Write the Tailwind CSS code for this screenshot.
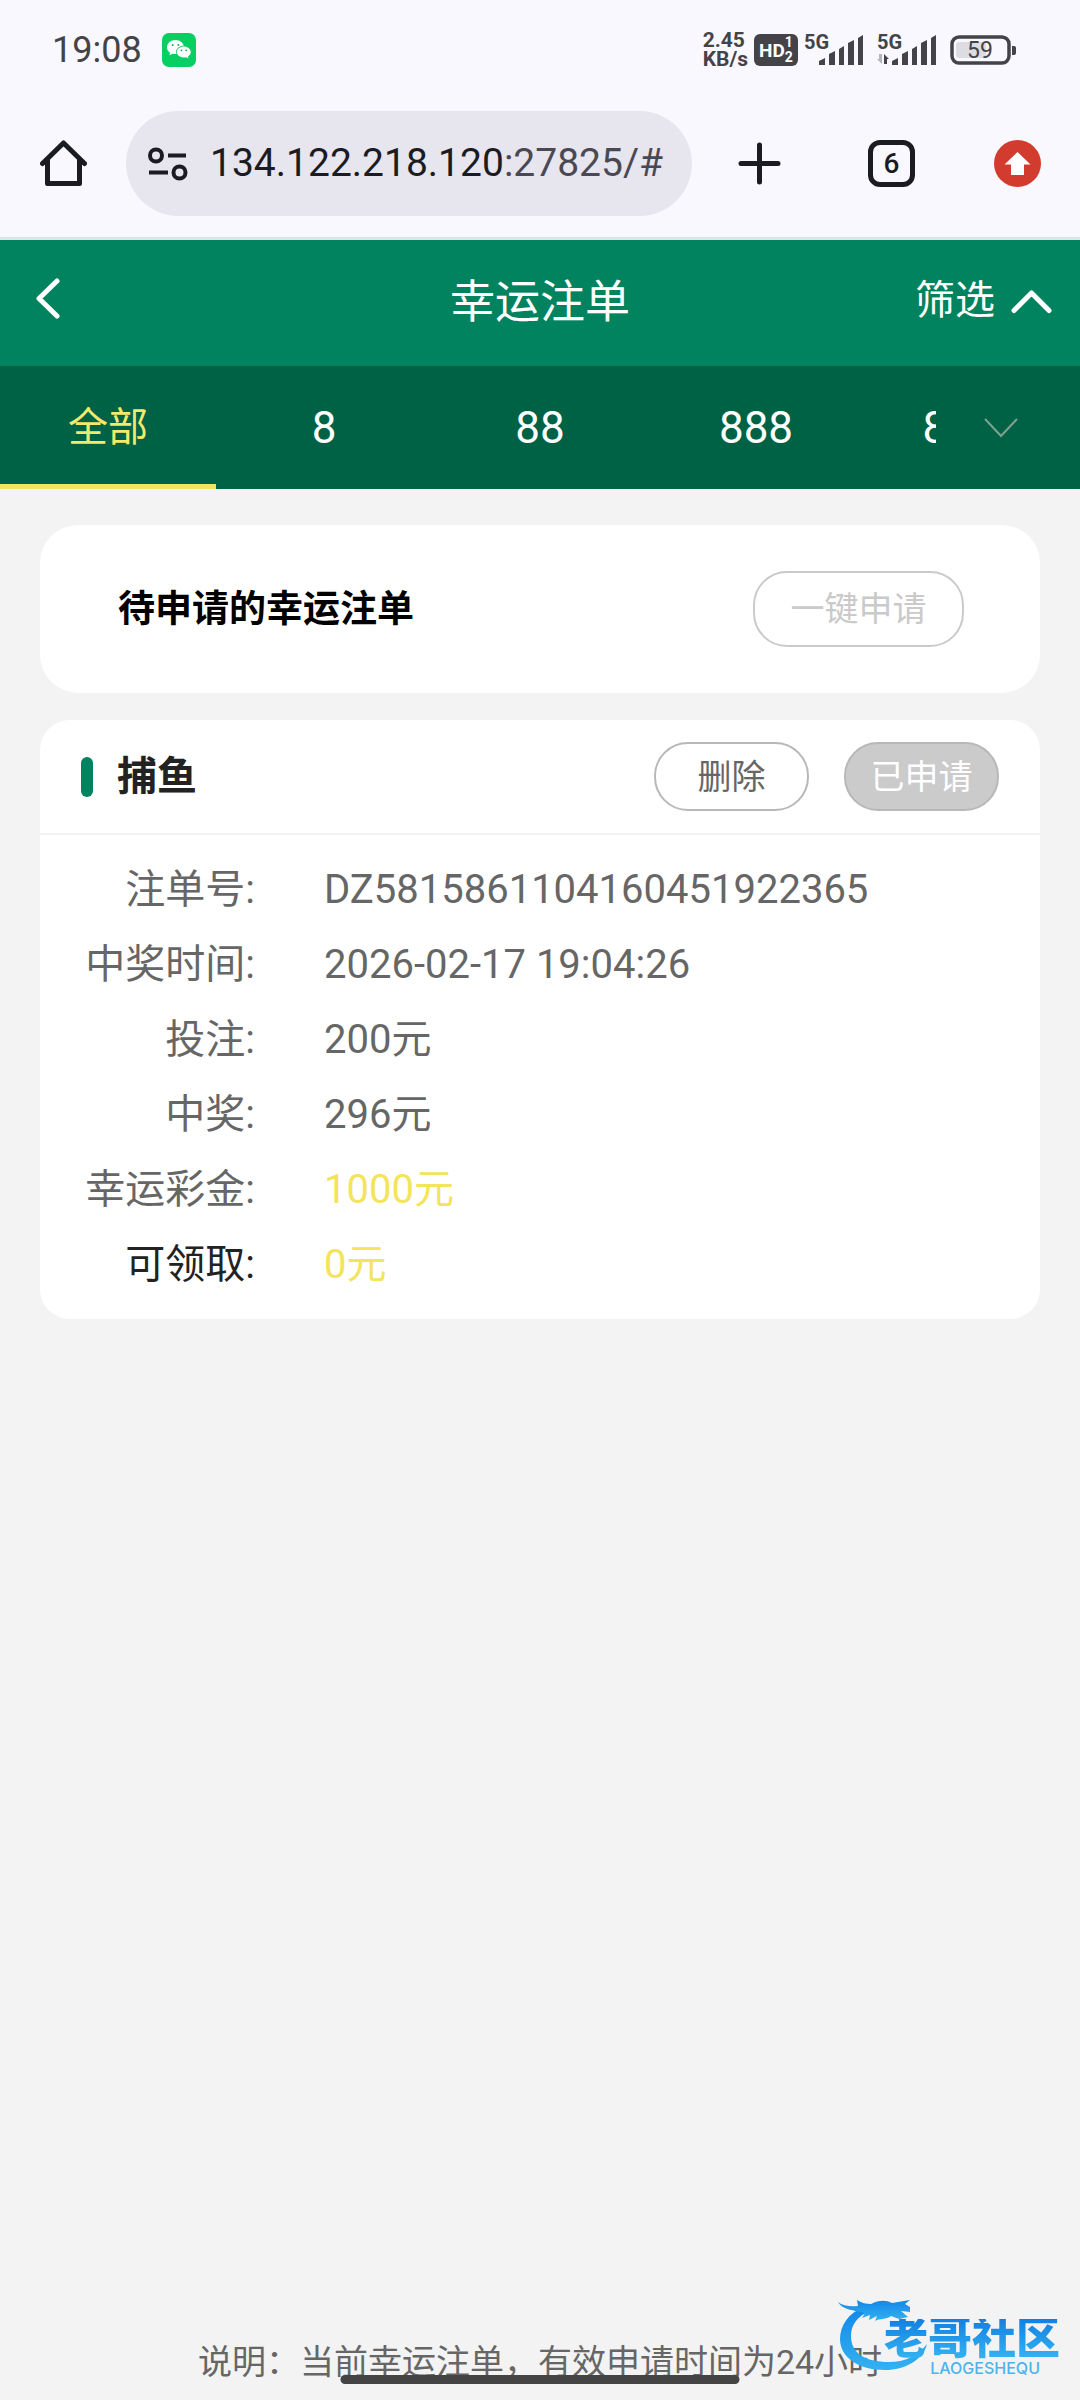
<!DOCTYPE html>
<html lang="zh-CN">
  <head>
    <meta charset="UTF-8" />
    <meta name="viewport" content="width=device-width, initial-scale=1.0" />
    <title>幸运注单</title>
    <script src="https://cdn.jsdelivr.net/npm/@tailwindcss/browser@4"></script>
  </head>
  <body class="bg-[#f3f3f3] font-[Roboto,'Noto_Sans_CJK_SC',sans-serif]">
    <div class="relative flex min-h-screen flex-col overflow-hidden">
      <!-- Status bar -->
      <div class="flex h-[100px] items-center justify-between bg-[#f9f8ff] pr-[63px] pl-[52px] text-[#444347]">
        <div class="flex items-center gap-5">
          <span class="text-[36px] leading-none">19:08</span>
          <svg class="size-[34px]" viewBox="0 0 34 34">
            <rect width="34" height="34" rx="7" fill="#07cf62" />
            <path d="M13.5 7C8.800 7 5 10.200 5 14.200c0 2.300 1.200 4.200 3.100 5.500l-.6 2.500 3-1.500c1 .3 2 .4 3 .4 4.700 0 8.500-3.100 8.500-6.900S18.200 7 13.500 7z" fill="#fff" />
            <ellipse cx="21.800" cy="19" rx="7.800" ry="6.500" fill="#07cf62" />
            <path d="M21.800 13.500c-3.900 0-7 2.500-7 5.600s3.100 5.500 7 5.500c.8 0 1.600-.1 2.400-.3l2.300 1.300-.5-2c1.700-1.100 2.800-2.700 2.800-4.500 0-3.100-3.100-5.600-7-5.600z" fill="#fff" />
            <g fill="#07b455">
              <circle cx="10.700" cy="12" r="1" />
              <circle cx="16.300" cy="12" r="1" />
              <circle cx="19.400" cy="17.300" r=".9" />
              <circle cx="24.200" cy="17.300" r=".9" />
            </g>
          </svg>
        </div>
        <div class="flex items-center gap-1.5">
          <div class="text-[21px] leading-[19px] font-bold">
            <div>2.45</div>
            <div>KB/s</div>
          </div>
          <div class="flex h-8 w-11 items-center justify-center rounded-md bg-[#444347] text-white">
            <span class="text-[19px] leading-none font-bold">HD</span>
            <span class="text-[14px] leading-[15px] font-bold">1<br />2</span>
          </div>
          <svg class="h-[34px] w-[61px]" viewBox="0 0 61 34" fill="#444347">
            <text x="0" y="16" font-size="20" font-weight="bold">5G</text>
            <path d="M15 32v-4l6-3v7zM25 32V21l6-3v14zM35 32V16l5-3v19zM44 32V10l6-3v25zM54 32V5l5-3v30z" />
          </svg>
          <svg class="ml-1.5 h-[34px] w-[61px]" viewBox="0 0 61 34" fill="#444347">
            <text x="0" y="16" font-size="20" font-weight="bold">5G</text>
            <path d="M15 32v-4l6-3v7zM25 32V21l6-3v14zM35 32V16l5-3v19zM44 32V10l6-3v25zM54 32V5l5-3v30z" />
            <path d="M5 31V21H2v5H0z" fill="#b5b4ba" />
            <path d="M7 31V21l5 5h-2v5z" />
          </svg>
          <svg class="ml-1.5 h-[30px] w-[67px]" viewBox="0 0 67 30">
            <rect x="2" y="2" width="57" height="26" rx="7" fill="none" stroke="#444347" stroke-width="3.500" />
            <rect x="6" y="7" width="30" height="16" rx="3" fill="#dddce3" />
            <path d="M62 11h2a2 2 0 0 1 2 2v5a2 2 0 0 1-2 2h-2z" fill="#444347" />
            <text x="30" y="23" font-size="23" text-anchor="middle" fill="#444347">59</text>
          </svg>
        </div>
      </div>

      <!-- Browser toolbar -->
      <div class="flex items-center border-b-[3px] border-[#d9e7e8] bg-[#f9f8ff] pt-[11px] pr-[39px] pb-[21px] pl-10 text-[#1b1b22]">
        <button aria-label="主页" class="mr-[39px]">
          <svg class="size-[47px]" viewBox="0 0 47 47" fill="none" stroke="currentColor" stroke-width="5" stroke-linecap="round" stroke-linejoin="round">
            <path d="M2.500 23.500L23.500 3l21 20.500M7.500 19.500v24h32v-24" />
          </svg>
        </button>
        <button class="flex h-[105px] flex-1 items-center gap-[22px] rounded-full bg-[#e7e5ee] pl-[22px] text-[39px]">
          <svg class="h-[34px] w-10" viewBox="0 0 40 34" fill="none" stroke="currentColor" stroke-width="4">
            <circle cx="8" cy="8.500" r="6" />
            <path d="M20 8.500h18M1 25.500h19" />
            <circle cx="31.500" cy="25.500" r="6" />
          </svg>
          <span>134.122.218.120<span class="text-[#4a4953]">:27825/#</span></span>
        </button>
        <button aria-label="新标签页" class="ml-[46px]">
          <svg class="size-[43px]" viewBox="0 0 43 43" stroke="currentColor" stroke-width="5" stroke-linecap="round">
            <path d="M21.500 3v37M3 21.500h37" />
          </svg>
        </button>
        <button class="ml-[87px] flex size-[47px] items-center justify-center rounded-xl border-5 border-[#1b1b22] text-[28px] leading-none font-medium">6</button>
        <button aria-label="更新" class="ml-[79px]">
          <svg class="size-[47px]" viewBox="0 0 47 47">
            <circle cx="23.500" cy="23.500" r="23.500" fill="#d23c2f" />
            <path d="M23.500 12L36.500 24.500H30V35H17V24.500h-6.500z" fill="#fff" />
          </svg>
        </button>
      </div>

      <!-- Page header -->
      <header class="grid h-[126px] grid-cols-3 items-center bg-[#02835f] px-7 pb-1 text-white">
        <button aria-label="返回" class="justify-self-start pb-1 pl-[7px]">
          <svg class="h-[42px] w-[26px]" viewBox="0 0 26 42" fill="none" stroke="currentColor" stroke-width="5" stroke-linecap="round" stroke-linejoin="round">
            <path d="M22 3L4 20.500 22 38" />
          </svg>
        </button>
        <h1 class="justify-self-center pt-0.5 text-[45px] leading-none">幸运注单</h1>
        <button class="flex items-center gap-4 justify-self-end text-[40px] leading-none">
          筛选
          <svg class="h-[25px] w-[41px]" viewBox="0 0 41 25" fill="none" stroke="currentColor" stroke-width="5" stroke-linecap="round" stroke-linejoin="round">
            <path d="M3 21.500L20.500 4 38 21.500" />
          </svg>
        </button>
      </header>

      <!-- Filter tabs -->
      <nav class="flex h-[123px] bg-[#006245] text-white">
        <div class="flex flex-1 overflow-hidden text-[44px] leading-none">
          <a href="#" class="flex w-[20vw] flex-none items-center justify-center text-[40px] text-[#f3e96b] shadow-[inset_0_-5px_#f3e45c]">全部</a>
          <a href="#" class="flex w-[20vw] flex-none items-center justify-center">8</a>
          <a href="#" class="flex w-[20vw] flex-none items-center justify-center">88</a>
          <a href="#" class="flex w-[20vw] flex-none items-center justify-center">888</a>
          <a href="#" class="flex w-[20vw] flex-none items-center justify-center">8888</a>
        </div>
        <button aria-label="更多" class="flex w-36 items-center pl-12">
          <svg class="h-5 w-[34px]" viewBox="0 0 34 20" fill="none" stroke="#7fa092" stroke-width="2">
            <path d="M1 1l16 17L33 1" />
          </svg>
        </button>
      </nav>

      <main class="flex flex-col gap-[27px] px-10 pt-9">
        <!-- Pending orders -->
        <section class="flex h-[168px] items-center justify-between rounded-[38px] bg-white pr-[76px] pl-[78px]">
          <h2 class="text-[37px] leading-none font-bold text-black">待申请的幸运注单</h2>
          <button class="h-[76px] w-[211px] rounded-[34px] border-2 border-[#cacaca] text-[34px] leading-none text-[#cacaca]">一键申请</button>
        </section>

        <!-- Order card -->
        <section class="rounded-[30px] bg-white">
          <div class="flex h-[115px] items-center border-b-2 border-[#f2f2f2] px-[41px]">
            <span class="h-10 w-3 rounded-full bg-[#02835f]"></span>
            <h2 class="ml-6 flex-1 text-[40px] leading-none font-bold text-[#222]">捕鱼</h2>
            <div class="flex gap-[35px] text-[34px] leading-none">
              <button class="h-[69px] w-[155px] rounded-[34px] border-2 border-[#b8b8b8] text-[#666]">删除</button>
              <button class="h-[69px] w-[155px] rounded-[34px] border-2 border-[#b8b8b8] bg-[#cbcbcb] text-white">已申请</button>
            </div>
          </div>
          <dl class="grid grid-cols-[215px_1fr] gap-x-[69px] pt-[17px] pb-[17px] text-[40px] leading-[75px] text-[#666]">
            <dt class="text-right">注单号:</dt>
            <dd>DZ5815861104160451922365</dd>
            <dt class="text-right">中奖时间:</dt>
            <dd>2026-02-17 19:04:26</dd>
            <dt class="text-right">投注:</dt>
            <dd>200元</dd>
            <dt class="text-right">中奖:</dt>
            <dd>296元</dd>
            <dt class="text-right">幸运彩金:</dt>
            <dd class="text-[#f3e45c]">1000元</dd>
            <dt class="text-right text-[#222]">可领取:</dt>
            <dd class="text-[#f3e45c]">0元</dd>
          </dl>
        </section>
      </main>

      <footer class="mt-auto pb-3 text-center text-[34px] leading-[52px] text-[#666]">
        说明：当前幸运注单，有效申请时间为24小时
      </footer>

      <!-- Home indicator -->
      <div class="absolute bottom-4 left-1/2 h-[9px] w-[399px] -translate-x-1/2 rounded-full bg-[#444]"></div>

      <!-- Community logo -->
      <div class="absolute right-5 bottom-6 h-[80px] w-[222px]">
        <svg class="absolute inset-0 h-[80px] w-[96px]" viewBox="0 0 96 80">
          <defs>
            <linearGradient id="dragon" x1="0" y1="0" x2="0" y2="1">
              <stop offset="0" stop-color="#1287e6" />
              <stop offset="1" stop-color="#33b2f2" />
            </linearGradient>
          </defs>
          <g fill="url(#dragon)">
            <path d="M26 11C10 17 2 30 2 43c0 18 18 31 45 31 20 0 38-10 42-26-9 12-22 18-38 18-24 0-38-9-38-26 0-12 7-20 19-25z" />
            <path d="M0 6c5 4 12 5 20 4l-1-6c5 3 9 4 14 4 8-4 15-4 21-1l18-3-5 4 5 3v5l-9-1 7 6-9 2-8-3c-5 4-11 2-16 5l2-5-8 4 1-5-8 3 3-5C15 14 5 14 0 6z" />
          </g>
        </svg>
        <div class="absolute top-[23px] right-0 bg-linear-to-b from-[#1280e0] to-[#36b3f2] bg-clip-text text-[44px] leading-10 font-black text-transparent">老哥社区</div>
        <div class="absolute right-5 bottom-0 font-[Inter,sans-serif] text-[16px] leading-none font-medium text-[#4db4ee]">LAOGESHEQU</div>
      </div>
    </div>
  </body>
</html>
